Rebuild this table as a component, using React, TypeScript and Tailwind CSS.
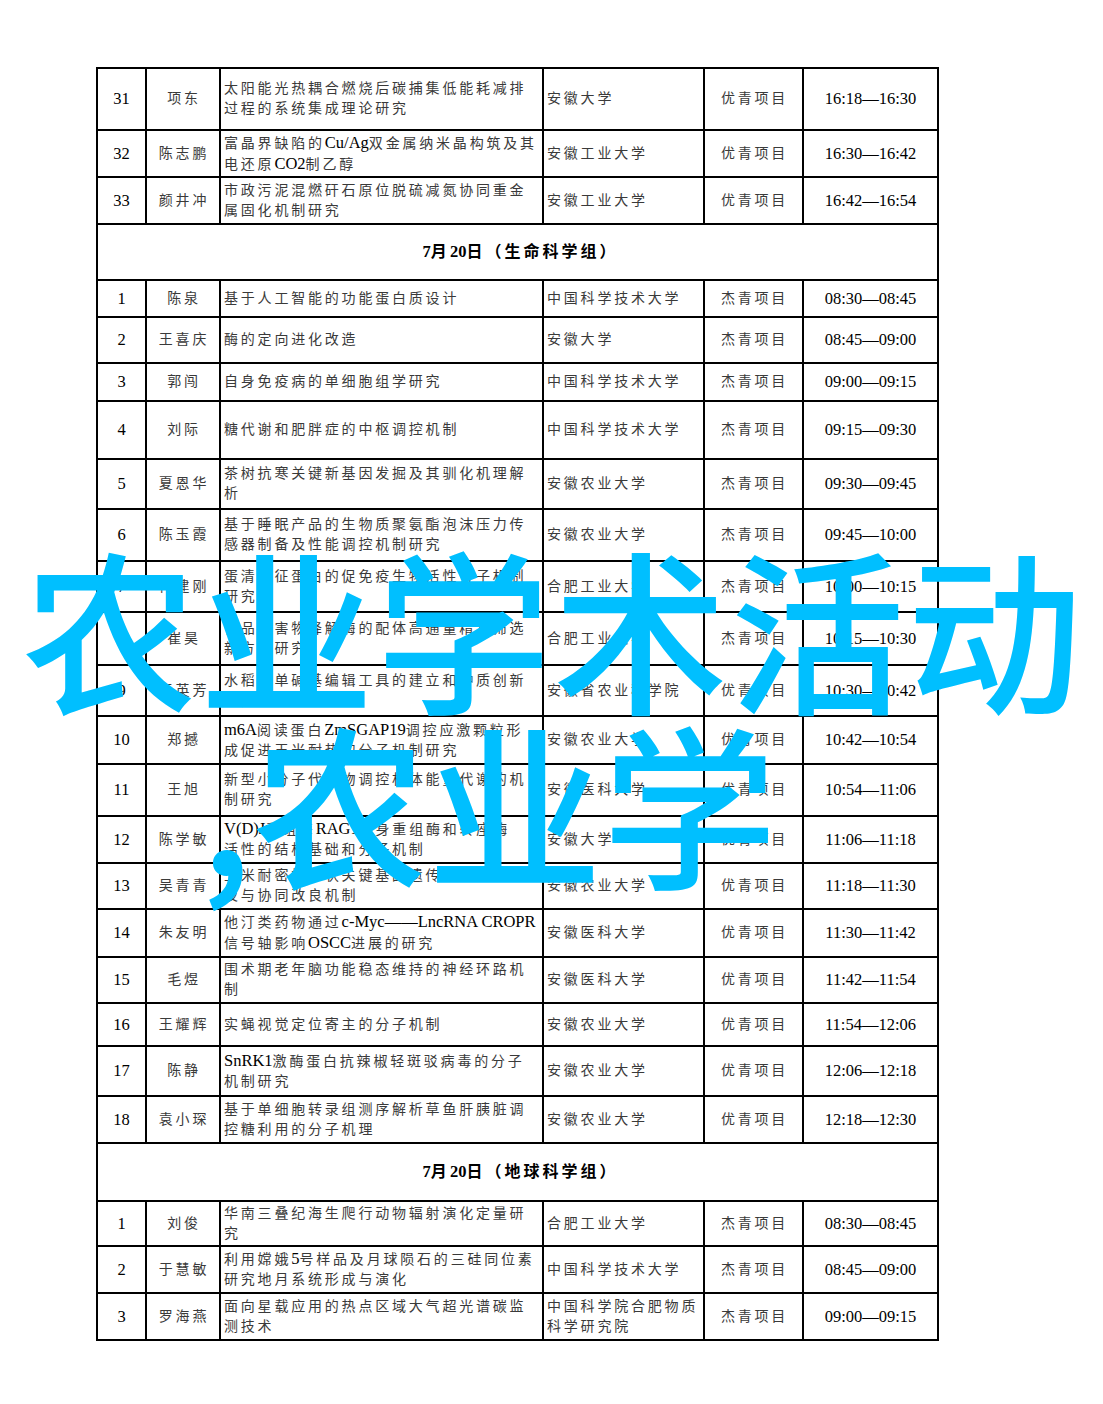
import React from "react";

type Entry = {
  no: string;
  name: string;
  title: string[];
  inst: string[];
  kind: string;
  time: string;
  h: string;
};

type Header = { header: string; h: string };

type Row = Entry | Header;

const rows: Row[] = [
  { no: "31", name: "项东", title: ["太阳能光热耦合燃烧后碳捕集低能耗减排", "过程的系统集成理论研究"], inst: ["安徽大学"], kind: "优青项目", time: "16:18—16:30", h: "h-[62px]" },
  { no: "32", name: "陈志鹏", title: ["富晶界缺陷的Cu/Ag双金属纳米晶构筑及其", "电还原CO2制乙醇"], inst: ["安徽工业大学"], kind: "优青项目", time: "16:30—16:42", h: "h-[47px]" },
  { no: "33", name: "颜井冲", title: ["市政污泥混燃矸石原位脱硫减氮协同重金", "属固化机制研究"], inst: ["安徽工业大学"], kind: "优青项目", time: "16:42—16:54", h: "h-[47px]" },
  { header: "7月20日（生命科学组）", h: "h-[56px]" },
  { no: "1", name: "陈泉", title: ["基于人工智能的功能蛋白质设计"], inst: ["中国科学技术大学"], kind: "杰青项目", time: "08:30—08:45", h: "h-[37px]" },
  { no: "2", name: "王喜庆", title: ["酶的定向进化改造"], inst: ["安徽大学"], kind: "杰青项目", time: "08:45—09:00", h: "h-[46px]" },
  { no: "3", name: "郭闯", title: ["自身免疫病的单细胞组学研究"], inst: ["中国科学技术大学"], kind: "杰青项目", time: "09:00—09:15", h: "h-[38px]" },
  { no: "4", name: "刘际", title: ["糖代谢和肥胖症的中枢调控机制"], inst: ["中国科学技术大学"], kind: "杰青项目", time: "09:15—09:30", h: "h-[58px]" },
  { no: "5", name: "夏恩华", title: ["茶树抗寒关键新基因发掘及其驯化机理解", "析"], inst: ["安徽农业大学"], kind: "杰青项目", time: "09:30—09:45", h: "h-[50px]" },
  { no: "6", name: "陈玉霞", title: ["基于睡眠产品的生物质聚氨酯泡沫压力传", "感器制备及性能调控机制研究"], inst: ["安徽农业大学"], kind: "杰青项目", time: "09:45—10:00", h: "h-[52px]" },
  { no: "7", name: "何建刚", title: ["蛋清特征蛋白的促免疫生物活性分子机制", "研究"], inst: ["合肥工业大学"], kind: "杰青项目", time: "10:00—10:15", h: "h-[51px]" },
  { no: "8", name: "崔昊", title: ["食品有害物降解酶的配体高通量精准筛选", "新方法研究"], inst: ["合肥工业大学"], kind: "杰青项目", time: "10:15—10:30", h: "h-[53px]" },
  { no: "9", name: "王英芳", title: ["水稻新单碱基编辑工具的建立和种质创新", "研究"], inst: ["安徽省农业科学院"], kind: "优青项目", time: "10:30—10:42", h: "h-[51px]" },
  { no: "10", name: "郑撼", title: ["m6A阅读蛋白ZmSGAP19调控应激颗粒形", "成促进玉米耐热的分子机制研究"], inst: ["安徽农业大学"], kind: "优青项目", time: "10:42—10:54", h: "h-[48px]" },
  { no: "11", name: "王旭", title: ["新型小分子代谢物调控机体能量代谢的机", "制研究"], inst: ["安徽医科大学"], kind: "优青项目", time: "10:54—11:06", h: "h-[52px]" },
  { no: "12", name: "陈学敏", title: ["V(D)J重组酶RAG1自身重组酶和转座酶", "活性的结构基础和分子机制"], inst: ["安徽大学"], kind: "优青项目", time: "11:06—11:18", h: "h-[47px]" },
  { no: "13", name: "吴青青", title: ["玉米耐密植性状关键基因遗传效应的解析", "及与协同改良机制"], inst: ["安徽农业大学"], kind: "优青项目", time: "11:18—11:30", h: "h-[46px]" },
  { no: "14", name: "朱友明", title: ["他汀类药物通过c-Myc——LncRNA CROPR", "信号轴影响OSCC进展的研究"], inst: ["安徽医科大学"], kind: "优青项目", time: "11:30—11:42", h: "h-[48px]" },
  { no: "15", name: "毛煜", title: ["围术期老年脑功能稳态维持的神经环路机", "制"], inst: ["安徽医科大学"], kind: "优青项目", time: "11:42—11:54", h: "h-[46px]" },
  { no: "16", name: "王耀辉", title: ["实蝇视觉定位寄主的分子机制"], inst: ["安徽农业大学"], kind: "优青项目", time: "11:54—12:06", h: "h-[43px]" },
  { no: "17", name: "陈静", title: ["SnRK1激酶蛋白抗辣椒轻斑驳病毒的分子", "机制研究"], inst: ["安徽农业大学"], kind: "优青项目", time: "12:06—12:18", h: "h-[50px]" },
  { no: "18", name: "袁小琛", title: ["基于单细胞转录组测序解析草鱼肝胰脏调", "控糖利用的分子机理"], inst: ["安徽农业大学"], kind: "优青项目", time: "12:18—12:30", h: "h-[47px]" },
  { header: "7月20日（地球科学组）", h: "h-[58px]" },
  { no: "1", name: "刘俊", title: ["华南三叠纪海生爬行动物辐射演化定量研", "究"], inst: ["合肥工业大学"], kind: "杰青项目", time: "08:30—08:45", h: "h-[45px]" },
  { no: "2", name: "于慧敏", title: ["利用嫦娥5号样品及月球陨石的三硅同位素", "研究地月系统形成与演化"], inst: ["中国科学技术大学"], kind: "杰青项目", time: "08:45—09:00", h: "h-[47px]" },
  { no: "3", name: "罗海燕", title: ["面向星载应用的热点区域大气超光谱碳监", "测技术"], inst: ["中国科学院合肥物质", "科学研究院"], kind: "杰青项目", time: "09:00—09:15", h: "h-[47px]" },
];

// latin runs are set in Times-like serif, the rest in the CJK face
const Mixed = ({ text, bold = false }: { text: string; bold?: boolean }) => {
  const parts = text.split(/([\x20-\x7E\u2014]+)/).filter(Boolean);
  return (
    <>
      {parts.map((p, i) =>
        /^[\x20-\x7E\u2014]+$/.test(p) ? (
          <span
            key={i}
            className={`font-['Liberation_Serif',serif] text-[16.5px] tracking-normal text-black ${bold ? "font-bold" : ""}`}
          >
            {p}
          </span>
        ) : (
          <span key={i}>{p}</span>
        )
      )}
    </>
  );
};

const cell = "shrink-0 border-r-2 border-b-2 border-black flex items-center";

const EntryRow = ({ r }: { r: Entry }) => (
  <div className={`flex ${r.h}`}>
    <div className={`${cell} w-[49px] justify-center`}>
      <Mixed text={r.no} />
    </div>
    <div className={`${cell} w-[74px] justify-center pl-[2px]`}>{r.name}</div>
    <div className={`${cell} w-[323px] pl-[3px]`}>
      <div className="flex flex-col">
        {r.title.map((l, i) => (
          <div key={i} className="whitespace-nowrap">
            <Mixed text={l} />
          </div>
        ))}
      </div>
    </div>
    <div className={`${cell} w-[161px] pl-[3px]`}>
      <div className="flex flex-col">
        {r.inst.map((l, i) => (
          <div key={i} className="whitespace-nowrap">
            {l}
          </div>
        ))}
      </div>
    </div>
    <div className={`${cell} w-[99px] justify-center pl-[2px]`}>{r.kind}</div>
    <div className={`${cell} w-[135px] justify-center`}>
      <Mixed text={r.time} />
    </div>
  </div>
);

const HeaderRow = ({ r }: { r: Header }) => (
  <div className={`flex ${r.h}`}>
    <div className={`${cell} flex-1 justify-center pl-[6px] font-bold text-[16px] tracking-[3px] text-black`}>
      <Mixed text={r.header} bold />
    </div>
  </div>
);

export default function App() {
  return (
    <div className="relative w-[1103px] h-[1404px] bg-white overflow-hidden font-['Liberation_Serif','Noto_Sans_CJK_SC',serif] text-[14px] leading-[20px] tracking-[2.8px] text-[#3a3a3a]">
      <div className="ml-[96px] pt-[67px]">
        <div className="w-[843px] border-l-2 border-t-2 border-black">
          {rows.map((r, i) =>
            "header" in r ? <HeaderRow key={i} r={r} /> : <EntryRow key={i} r={r} />
          )}
        </div>
      </div>

      {/* watermark over the table */}
      <div className="pointer-events-none absolute left-[22px] top-[537px] whitespace-nowrap font-['Noto_Sans_CJK_SC',sans-serif] font-medium text-[175px] leading-[175px] tracking-[2px] text-[#00bfff]">
        农业学术活动
      </div>
      <div className="pointer-events-none absolute left-[200px] top-[712px] whitespace-nowrap font-['Noto_Sans_CJK_SC',sans-serif] font-medium text-[175px] leading-[175px] tracking-normal text-[#00bfff]">
        ,农业学
      </div>
    </div>
  );
}
